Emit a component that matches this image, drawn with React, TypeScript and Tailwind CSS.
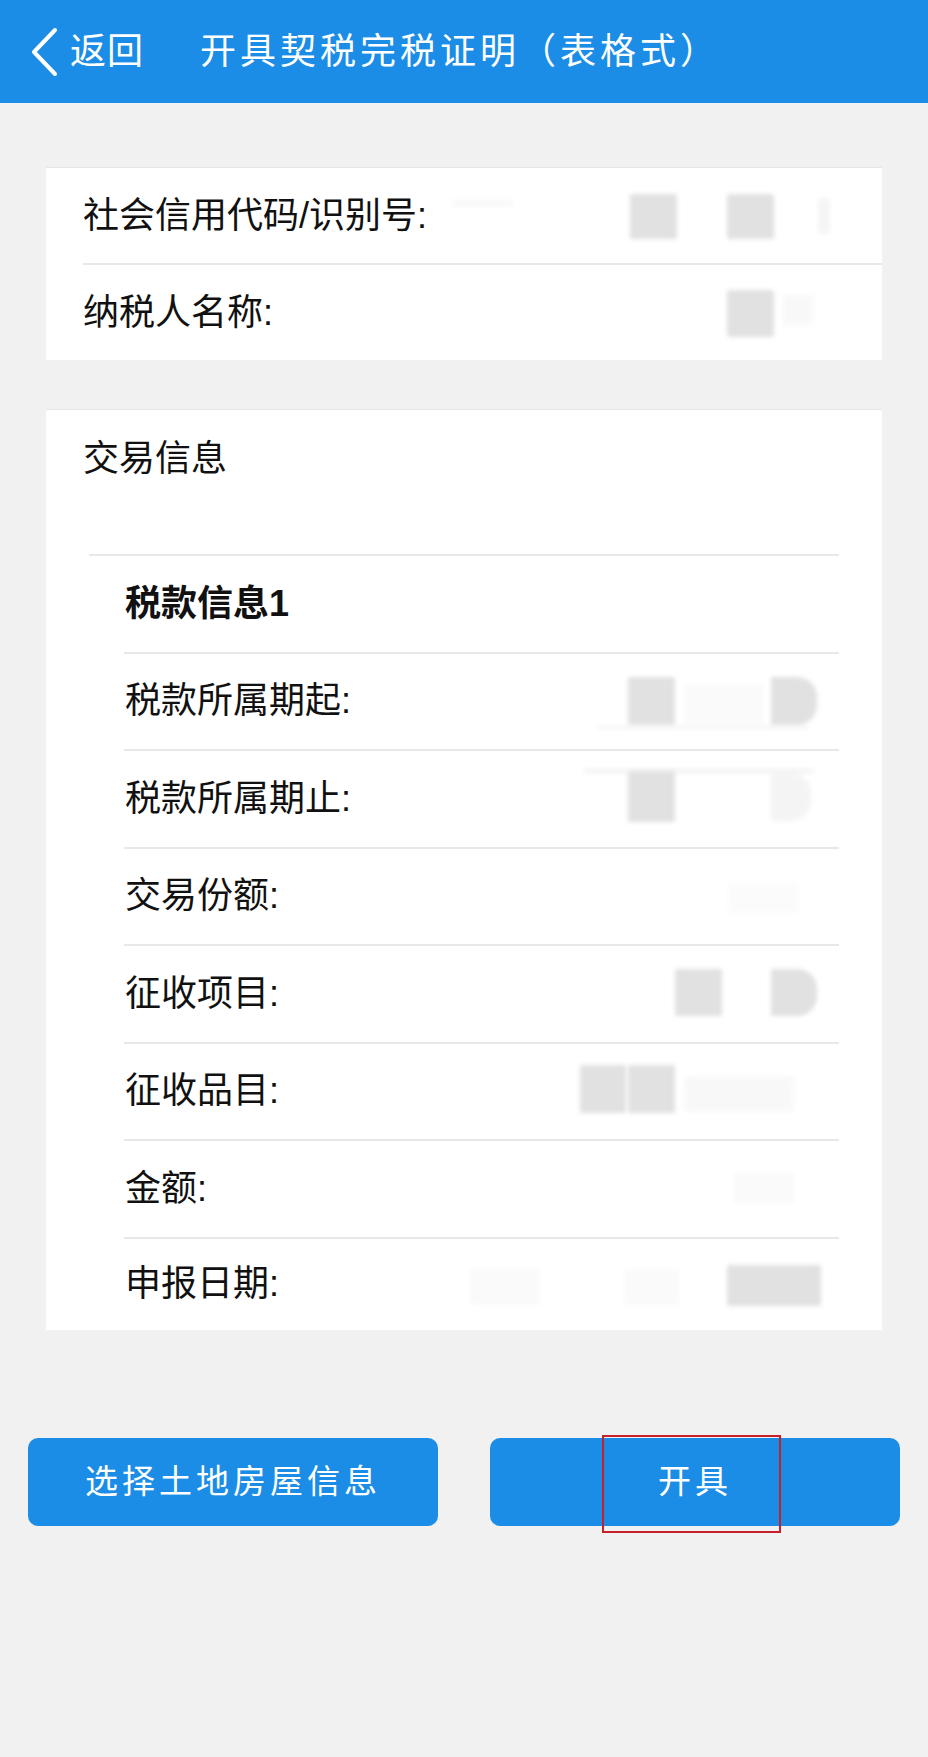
import React from 'react';

type Block = { x: number; y: number; w: number; h: number; o?: number; round?: boolean };
type Row = { label: string; bold?: boolean; blocks: Block[] };

// blurred redaction marks, offsets relative to the row's left/top edge
const topRows: Row[] = [
  {
    label: '社会信用代码/识别号:',
    blocks: [
      { x: 370, y: 32, w: 60, h: 6, o: 0.25 },
      { x: 547, y: 26, w: 47, h: 45 },
      { x: 644, y: 26, w: 47, h: 45 },
      { x: 735, y: 30, w: 12, h: 36, o: 0.3 },
    ],
  },
  {
    label: '纳税人名称:',
    blocks: [
      { x: 644, y: 25, w: 47, h: 47 },
      { x: 700, y: 30, w: 30, h: 30, o: 0.2 },
    ],
  },
];

const taxRows: Row[] = [
  { label: '税款信息1', bold: true, blocks: [] },
  {
    label: '税款所属期起:',
    blocks: [
      { x: 504, y: 23, w: 47, h: 48 },
      { x: 560, y: 30, w: 80, h: 40, o: 0.15 },
      { x: 647, y: 23, w: 46, h: 48, round: true },
      { x: 474, y: 72, w: 210, h: 3, o: 0.4 },
    ],
  },
  {
    label: '税款所属期止:',
    blocks: [
      { x: 460, y: 18, w: 230, h: 4, o: 0.45 },
      { x: 504, y: 20, w: 47, h: 51 },
      { x: 647, y: 22, w: 40, h: 48, o: 0.35, round: true },
    ],
  },
  {
    label: '交易份额:',
    blocks: [{ x: 604, y: 34, w: 70, h: 30, o: 0.12 }],
  },
  {
    label: '征收项目:',
    blocks: [
      { x: 551, y: 23, w: 47, h: 47 },
      { x: 647, y: 23, w: 46, h: 47, round: true },
    ],
  },
  {
    label: '征收品目:',
    blocks: [
      { x: 456, y: 21, w: 46, h: 48 },
      { x: 504, y: 21, w: 47, h: 48 },
      { x: 560, y: 32, w: 110, h: 36, o: 0.2 },
    ],
  },
  {
    label: '金额:',
    blocks: [{ x: 610, y: 32, w: 60, h: 30, o: 0.15 }],
  },
  {
    label: '申报日期:',
    blocks: [
      { x: 346, y: 30, w: 70, h: 36, o: 0.15 },
      { x: 500, y: 30, w: 55, h: 36, o: 0.15 },
      { x: 603, y: 26, w: 94, h: 41 },
    ],
  },
];

function Blocks({ blocks }: { blocks: Block[] }) {
  return (
    <>
      {blocks.map((b, i) => (
        <span
          key={i}
          className={`absolute bg-[#e1e1e1] blur-[2px] ${b.round ? 'rounded-r-[20px]' : 'rounded-[2px]'}`}
          style={{ left: b.x, top: b.y, width: b.w, height: b.h, opacity: b.o ?? 1 }}
        />
      ))}
    </>
  );
}

export default function App() {
  return (
    <div className="min-h-[1757px] w-[928px] bg-[#f1f1f1] font-['Liberation_Sans','Noto_Sans_CJK_SC',sans-serif] text-[#111]">
      {/* header */}
      <div className="flex h-[103px] items-center bg-[#1b8de6] text-white">
        <svg className="ml-[30px]" width="28" height="50" viewBox="0 0 28 50" fill="none">
          <polyline points="25,3 4,25 25,47" stroke="white" strokeWidth="4" strokeLinecap="round" strokeLinejoin="round" />
        </svg>
        <span className="ml-[12px] text-[36px] tracking-[1px]">返回</span>
        <span className="ml-[56px] text-[36px] tracking-[4px]">开具契税完税证明（表格式）</span>
      </div>

      {/* taxpayer card */}
      <div className="mx-[46px] mt-[64px] border-t border-[#e6e6e6] bg-white pl-[37px]">
        {topRows.map((r, i) => (
          <div
            key={r.label}
            className={`relative flex items-center text-[36px] ${i === 0 ? 'h-[97px] border-b-2 border-[#e8e8e8]' : 'h-[95px]'}`}
          >
            <span>{r.label}</span>
            <Blocks blocks={r.blocks} />
          </div>
        ))}
      </div>

      {/* transaction card */}
      <div className="mx-[46px] mt-[49px] border-t border-[#e6e6e6] bg-white">
        <div className="flex h-[98px] items-center pl-[37px] text-[36px]">交易信息</div>
        <div className="h-[46px]" />
        <div className="ml-[43px] mr-[43px] border-t-2 border-[#e8e8e8] pl-[35px]">
          {taxRows.map((r, i) => (
            <div
              key={r.label}
              className={`relative flex items-center text-[36px] ${
                i === 0
                  ? 'h-[95.5px] font-bold'
                  : i === taxRows.length - 1
                    ? 'h-[93px] border-t-2 border-[#e8e8e8]'
                    : 'h-[97.5px] border-t-2 border-[#e8e8e8]'
              }`}
            >
              <span className="pl-[1px]">{r.label}</span>
              <Blocks blocks={r.blocks} />
            </div>
          ))}
        </div>
      </div>

      {/* actions */}
      <div className="mt-[108px] flex gap-[52px] px-[28px]">
        <button className="h-[88px] flex-1 rounded-[10px] bg-[#1b8de6] text-[33px] tracking-[4px] text-white">
          选择土地房屋信息
        </button>
        <button className="relative h-[88px] flex-1 rounded-[10px] bg-[#1b8de6] text-[33px] tracking-[4px] text-white">
          开具
          <span className="absolute left-[112px] top-[-3px] h-[98px] w-[179px] border-2 border-[#c8202b]" />
        </button>
      </div>
    </div>
  );
}
